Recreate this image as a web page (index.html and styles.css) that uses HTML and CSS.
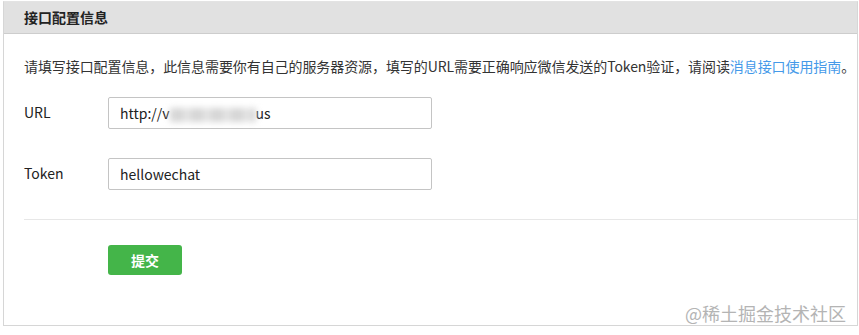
FILE: index.html
```html
<!DOCTYPE html>
<html lang="zh-CN">
<head>
    <meta charset="UTF-8">
    <meta name="viewport" content="width=device-width, initial-scale=1.0">
    <title>接口配置信息</title>
    <link rel="stylesheet" href="styles.css">
</head>
<body>
<div class="panel">
    <div class="panel-hd">接口配置信息</div>
    <div class="panel-bd">
        <p class="tips">请填写接口配置信息，此信息需要你有自己的服务器资源，填写的URL需要正确响应微信发送的Token验证，请阅读<a href="#">消息接口使用指南</a>。</p>
        <form class="config-form">
            <div class="form-row">
                <label for="url">URL</label>
                <div class="input-box">
                    <span>http://v</span><span class="mosaic"></span><span>us</span>
                </div>
            </div>
            <div class="form-row">
                <label for="token">Token</label>
                <input type="text" id="token" name="token" value="hellowechat">
            </div>
            <div class="form-divider"></div>
            <div class="form-actions">
                <button type="button" class="btn-submit">提交</button>
            </div>
        </form>
    </div>
</div>
<div class="watermark">@稀土掘金技术社区</div>
</body>
</html>
```

FILE: styles.css
```css
body {
    margin: 0;
    font-family: "Noto Sans CJK SC", "Open Sans", sans-serif;
    font-size: 14px;
    color: #222;
    background-color: #fff;
}

.panel {
    margin: 1px 1px 0 3px;
    border: 1px solid #d6d6d6;
    border-top-color: #e3e3e3;
}

.panel-hd {
    height: 31px;
    line-height: 31px;
    padding: 0 20px;
    background-color: #e1e1e1;
    border-bottom: 1px solid #cdcdcd;
    font-weight: bold;
    color: #222;
}

.panel-bd {
    padding: 0 0 50px 20px;
}

.tips {
    margin: 22px 0 0;
    line-height: 20px;
    color: #333;
    white-space: nowrap;
    letter-spacing: -0.08px;
}

.tips a {
    color: #459ae9;
    text-decoration: none;
}

.config-form {
    margin-top: 21px;
}

.form-row {
    display: flex;
    align-items: center;
    margin-bottom: 29px;
}

.form-row label {
    width: 84px;
    margin-top: -2px;
    color: #222;
}

.form-row input,
.input-box {
    box-sizing: border-box;
    width: 324px;
    height: 32px;
    padding: 0 11px;
    border: 1px solid #c4c4c4;
    border-radius: 2px;
    font-family: inherit;
    font-size: 14px;
    color: #222;
}

.input-box {
    display: flex;
    align-items: center;
}

.mosaic {
    display: inline-block;
    width: 86px;
    height: 14px;
    margin-top: 4px;
    background: repeating-linear-gradient(90deg, #d6d6d6 0 14px, #e6e6e6 14px 20px);
    filter: blur(3px);
}

.form-divider {
    height: 1px;
    background-color: #e7e7e7;
}

.form-actions {
    padding: 25px 0 0 84px;
}

.btn-submit {
    width: 74px;
    height: 30px;
    border: none;
    border-radius: 3px;
    background-color: #44b549;
    color: #fff;
    font-family: inherit;
    font-size: 14px;
    font-weight: bold;
    cursor: pointer;
}

.watermark {
    position: absolute;
    right: 13px;
    top: 300px;
    font-size: 18px;
    color: #b4b4b4;
}
```
